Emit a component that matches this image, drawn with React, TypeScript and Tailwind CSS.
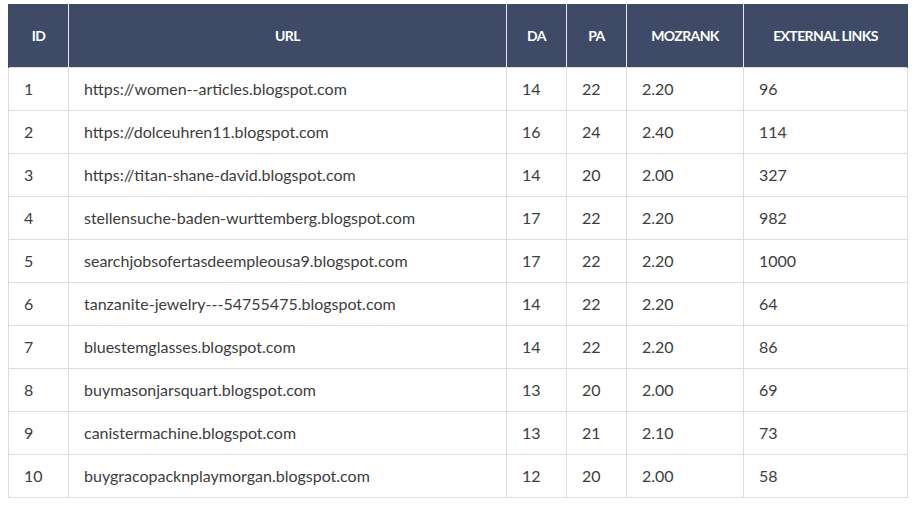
import React from 'react';

interface Row {
  id: number;
  url: string;
  da: number;
  pa: number;
  mozrank: string;
  links: number;
}

const rows: Row[] = [
  { id: 1, url: 'https://women--articles.blogspot.com', da: 14, pa: 22, mozrank: '2.20', links: 96 },
  { id: 2, url: 'https://dolceuhren11.blogspot.com', da: 16, pa: 24, mozrank: '2.40', links: 114 },
  { id: 3, url: 'https://titan-shane-david.blogspot.com', da: 14, pa: 20, mozrank: '2.00', links: 327 },
  { id: 4, url: 'stellensuche-baden-wurttemberg.blogspot.com', da: 17, pa: 22, mozrank: '2.20', links: 982 },
  { id: 5, url: 'searchjobsofertasdeempleousa9.blogspot.com', da: 17, pa: 22, mozrank: '2.20', links: 1000 },
  { id: 6, url: 'tanzanite-jewelry---54755475.blogspot.com', da: 14, pa: 22, mozrank: '2.20', links: 64 },
  { id: 7, url: 'bluestemglasses.blogspot.com', da: 14, pa: 22, mozrank: '2.20', links: 86 },
  { id: 8, url: 'buymasonjarsquart.blogspot.com', da: 13, pa: 20, mozrank: '2.00', links: 69 },
  { id: 9, url: 'canistermachine.blogspot.com', da: 13, pa: 21, mozrank: '2.10', links: 73 },
  { id: 10, url: 'buygracopacknplaymorgan.blogspot.com', da: 12, pa: 20, mozrank: '2.00', links: 58 },
];

const headers = [
  { label: 'ID', width: 'w-[60px]' },
  { label: 'URL', width: 'w-[438px]' },
  { label: 'DA', width: 'w-[60px]' },
  { label: 'PA', width: 'w-[60px]' },
  { label: 'MOZRANK', width: 'w-[117px]' },
  { label: 'EXTERNAL LINKS', width: 'w-[164px]' },
];

export default function App() {
  return (
    <div className="w-[914px] h-[506px] bg-white pt-[4px] pl-[8px] font-['Lato','Liberation_Sans',sans-serif]">
      <table className="w-[899px] table-fixed border-collapse">
        <thead>
          <tr className="bg-[#3e4a66] h-[63px]">
            {headers.map((h) => (
              <th
                key={h.label}
                className={`${h.width} border-x border-[#e6e8ee] first:border-l-[#3e4a66] last:border-r-[#3e4a66] text-center text-[14px] font-bold tracking-[-0.6px] text-white`}
              >
                {h.label}
              </th>
            ))}
          </tr>
        </thead>
        <tbody className="text-[16px] text-[#3d3d3d]">
          {rows.map((r) => (
            <tr key={r.id} className="h-[43px]">
              <td className="border border-[#dddddd] pl-[15px] pt-[1px]">{r.id}</td>
              <td className="border border-[#dddddd] pl-[15px] pt-[1px]">{r.url}</td>
              <td className="border border-[#dddddd] pl-[15px] pt-[1px]">{r.da}</td>
              <td className="border border-[#dddddd] pl-[15px] pt-[1px]">{r.pa}</td>
              <td className="border border-[#dddddd] pl-[15px] pt-[1px]">{r.mozrank}</td>
              <td className="border border-[#dddddd] pl-[15px] pt-[1px]">{r.links}</td>
            </tr>
          ))}
        </tbody>
      </table>
    </div>
  );
}
